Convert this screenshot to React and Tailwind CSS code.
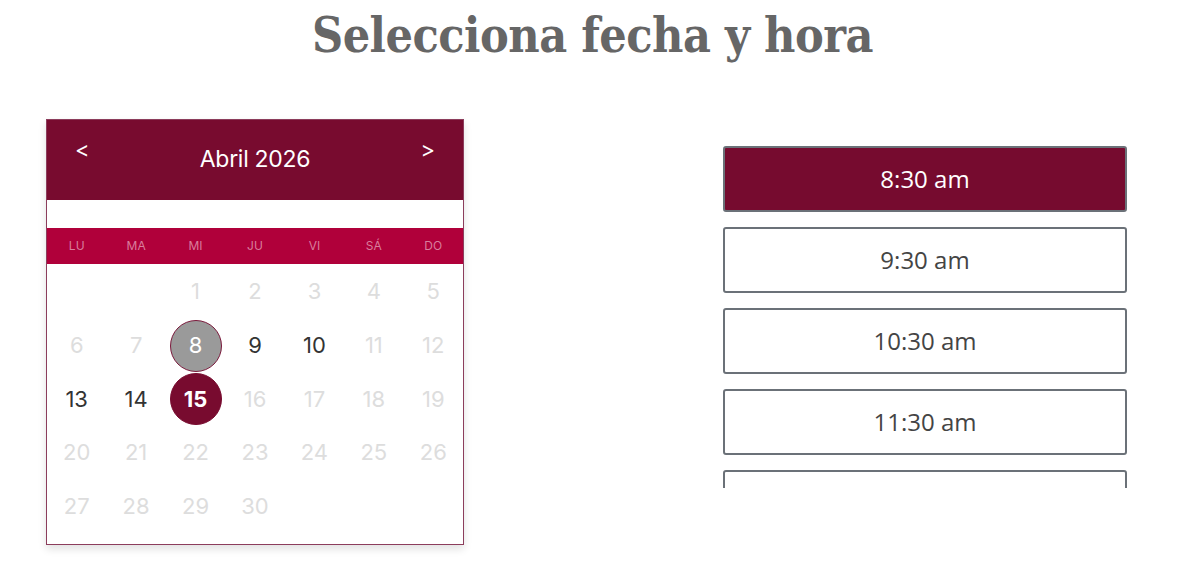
import { useState } from "react";

const dias = ["LU", "MA", "MI", "JU", "VI", "SÁ", "DO"];
const horas = ["8:30 am", "9:30 am", "10:30 am", "11:30 am", "12:30 pm"];

// abril 2026 empieza en miércoles
const celdas = [null, null, ...Array.from({ length: 30 }, (_, i) => i + 1)];
const disponibles = [8, 9, 10, 13, 14, 15];

function App() {
  const [dia, setDia] = useState(15);
  const [hora, setHora] = useState("8:30 am");

  return (
    <div className="min-h-screen bg-white">
      <h1
        className="pt-[11px] text-center text-[48px] leading-none font-bold text-[#666] pr-[15px] tracking-[-0.5px]"
        style={{ fontFamily: '"DejaVu Serif Condensed", "DejaVu Serif", serif', fontStretch: "condensed" }}
      >
        Selecciona fecha y hora
      </h1>

      <div className="flex mt-[60px] pl-[46px] pr-[73px]">
        {/* CALENDARIO */}
        <div
          className="w-[418px] border border-[#8c3d5c] shadow-[0_4px_8px_rgba(0,0,0,0.12)] bg-white"
          style={{ fontFamily: 'Inter, "Liberation Sans", sans-serif' }}
        >
          <div className="h-[80px] bg-[#780b2f] text-white flex items-start justify-between px-[28px]">
            <button className="text-[22px] mt-[18px] leading-none">&lt;</button>
            <div className="text-[23px] mt-[28px] leading-none tracking-[-0.3px]">Abril 2026</div>
            <button className="text-[22px] mt-[18px] leading-none">&gt;</button>
          </div>
          <div className="h-[28px] bg-white"></div>
          <div className="h-[36px] bg-[#b0003a] grid grid-cols-7 items-center">
            {dias.map((d) => (
              <div key={d} className="text-center text-[12px] text-[#d97d9c]">
                {d}
              </div>
            ))}
          </div>
          <div className="grid grid-cols-7 pt-[1px] pb-[11px]">
            {celdas.map((n, i) => {
              const activo = disponibles.includes(n);
              const sel = n === dia;
              const hoy = n === 8;
              return (
                <div key={i} className="h-[53.7px] flex items-center justify-center">
                  {n && (
                    <button
                      onClick={() => activo && setDia(n)}
                      className={
                        "w-[52px] h-[52px] rounded-full flex items-center justify-center text-[22px] " +
                        (sel
                          ? "bg-[#780b2f] text-white font-bold border border-[#780b2f]"
                          : hoy
                          ? "bg-[#9a9a9a] text-white border border-[#7a1a3c]"
                          : activo
                          ? "text-[#333]"
                          : "text-[#ddd]")
                      }
                    >
                      {n}
                    </button>
                  )}
                </div>
              );
            })}
          </div>
        </div>

        {/* HORAS */}
        <div className="ml-auto w-[404px] mt-[27px] h-[342px] overflow-hidden">
          <div className="flex flex-col gap-[15px]">
            {horas.map((h) => (
              <button
                key={h}
                onClick={() => setHora(h)}
                className={
                  "h-[66px] rounded-[3px] border-2 border-[#6b7178] text-[24px] " +
                  (hora === h ? "bg-[#760b2f] text-white" : "bg-white text-[#444]")
                }
                style={{ fontFamily: '"Open Sans", sans-serif' }}
              >
                {h}
              </button>
            ))}
          </div>
        </div>
      </div>
    </div>
  );
}

export default App;
